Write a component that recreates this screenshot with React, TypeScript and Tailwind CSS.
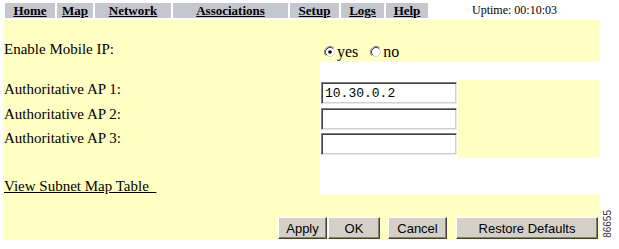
import React from 'react';

const serif = "font-['Liberation_Serif','Times_New_Roman',serif]";
const sans = "font-['Liberation_Sans',Arial,sans-serif]";

const navItems = [
    { label: 'Home', w: 'w-[50px]' },
    { label: 'Map', w: 'w-[36px]' },
    { label: 'Network', w: 'w-[76px]' },
    { label: 'Associations', w: 'w-[115px]' },
    { label: 'Setup', w: 'w-[49px]' },
    { label: 'Logs', w: 'w-[43px]' },
    { label: 'Help', w: 'w-[42px]' },
];

function Radio({ checked }: { checked: boolean }) {
    return (
        <svg width="12" height="12" viewBox="0 0 12 12" className="shrink-0">
            <circle cx="6" cy="6" r="5" fill="#ffffff" />
            <path d="M2.11 9.89 A5.5 5.5 0 0 1 9.89 2.11" fill="none" stroke="#808080" strokeWidth="1" />
            <path d="M9.89 2.11 A5.5 5.5 0 0 1 2.11 9.89" fill="none" stroke="#ffffff" strokeWidth="1" />
            <path d="M2.82 9.18 A4.5 4.5 0 0 1 9.18 2.82" fill="none" stroke="#404040" strokeWidth="1" />
            <path d="M9.18 2.82 A4.5 4.5 0 0 1 2.82 9.18" fill="none" stroke="#d4d0c8" strokeWidth="1" />
            {checked && <circle cx="6" cy="6" r="1.8" fill="#000000" />}
        </svg>
    );
}

function Field({ value, top }: { value?: string; top: string }) {
    return (
        <div className={`bg-white pl-[1px] ${top}`}>
            <input
                type="text"
                defaultValue={value}
                className="block w-[136px] h-[22px] px-[3px] bg-white text-black text-[13px] font-['Liberation_Mono','Courier_New',monospace] border border-t-[#808080] border-l-[#808080] border-b-[#e8e8e8] border-r-[#e8e8e8] shadow-[inset_1px_1px_#404040,inset_-1px_-1px_#d4d0c8] outline-none"
            />
        </div>
    );
}

function Btn({ label, w }: { label: string; w: string }) {
    return (
        <button
            className={`${w} h-[22px] bg-[#d4d0c8] text-black text-[13px] ${sans} border border-t-white border-l-white border-b-[#404040] border-r-[#404040] shadow-[inset_-1px_-1px_#808080]`}
        >
            {label}
        </button>
    );
}

export default function App() {
    return (
        <div className={`w-[619px] h-[249px] bg-white text-black overflow-hidden ${serif}`}>
            {/* Top nav */}
            <div className="flex items-center pt-[3px] pl-[5px]">
                <div className="flex gap-[2px]">
                    {navItems.map((item) => (
                        <a
                            key={item.label}
                            href="#"
                            className={`${item.w} h-[15px] bg-[#c6c6ce] flex items-center justify-center text-[13px] font-bold underline leading-[15px]`}
                        >
                            {item.label}
                        </a>
                    ))}
                </div>
                <span className="ml-[44px] text-[12px] leading-[15px]">Uptime: 00:10:03</span>
            </div>

            <div className="flex mt-[2px]">
                <div className="ml-[3px] w-[597px] grid grid-cols-[317px_138px_142px] grid-rows-[42px_18px_25px_25px_28px_37px_45px] text-[15px] leading-[17px]">
                    {/* Enable Mobile IP */}
                    <div className="bg-[#ffffc4] pl-[1px] pt-[21px]">Enable Mobile IP:</div>
                    <div className="col-span-2 bg-[#ffffc4] pt-[21px] pl-[4px] flex items-center text-[16px]">
                        <Radio checked />
                        <span className="ml-[1px]">yes</span>
                        <span className="ml-[12px]"><Radio checked={false} /></span>
                        <span className="ml-[1px]">no</span>
                    </div>

                    {/* spacer */}
                    <div className="bg-[#ffffc4]"></div>
                    <div className="col-span-2 bg-white"></div>

                    {/* Authoritative APs */}
                    <div className="bg-[#ffffc4] pl-[1px] pt-[1px]">Authoritative AP 1:</div>
                    <Field value="10.30.0.2" top="pt-[2px]" />
                    <div className="bg-[#ffffc4]"></div>

                    <div className="bg-[#ffffc4] pl-[1px] pt-[1px]">Authoritative AP 2:</div>
                    <Field top="pt-[3px]" />
                    <div className="bg-[#ffffc4]"></div>

                    <div className="bg-[#ffffc4] pl-[1px]">Authoritative AP 3:</div>
                    <Field top="pt-[3px]" />
                    <div className="bg-[#ffffc4]"></div>

                    {/* Subnet map link */}
                    <div className="bg-[#ffffc4] pl-[1px] pt-[20px]">
                        <a href="#" className="underline whitespace-pre">View Subnet Map Table  </a>
                    </div>
                    <div className="col-span-2 bg-white"></div>

                    {/* Buttons */}
                    <div className="col-span-3 bg-[#ffffc4] flex justify-end items-start pt-[22px] pr-[2px]">
                        <Btn label="Apply" w="w-[49px]" />
                        <div className="ml-[1px]"><Btn label="OK" w="w-[52px]" /></div>
                        <div className="ml-[8px]"><Btn label="Cancel" w="w-[59px]" /></div>
                        <div className="ml-[9px]"><Btn label="Restore Defaults" w="w-[142px]" /></div>
                    </div>
                </div>

                <div className="flex items-end pb-[2px] pl-[3px]">
                    <span className={`text-[10px] leading-[10px] text-[#333] [writing-mode:vertical-rl] rotate-180 ${sans}`}>86655</span>
                </div>
            </div>
        </div>
    );
}
